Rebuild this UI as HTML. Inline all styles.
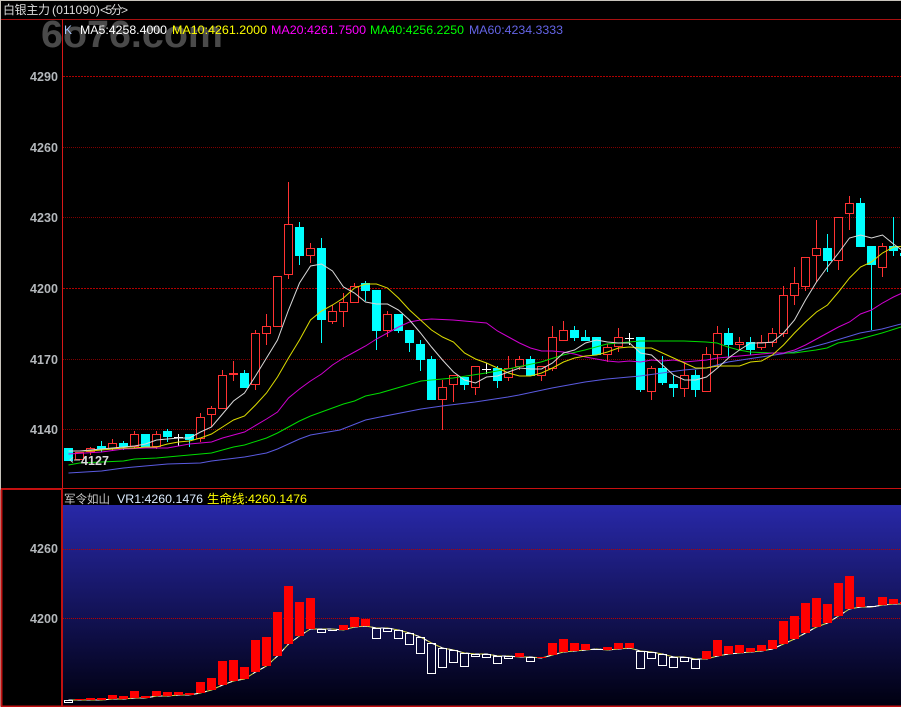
<!DOCTYPE html>
<html><head><meta charset="utf-8"><style>
html,body{margin:0;padding:0;background:#000;width:901px;height:707px;overflow:hidden}
svg{display:block}
text{font-family:"Liberation Sans","Noto Sans CJK SC",sans-serif;font-size:12px}
.a{font-weight:bold;fill:#b4b8bc;font-size:12.5px}
</style></head><body>
<svg width="901" height="707" viewBox="0 0 901 707" xmlns="http://www.w3.org/2000/svg">
<defs><linearGradient id="g" x1="0" y1="0" x2="0" y2="1"><stop offset="0" stop-color="#2828a8"/><stop offset="1" stop-color="#000010"/></linearGradient>
<clipPath id="c"><rect x="0" y="20" width="300" height="40"/></clipPath></defs>
<rect width="901" height="707" fill="#000"/>
<rect width="901" height="1" fill="#c8c4bc"/>
<rect width="1" height="707" fill="#c8c4bc"/>
<text x="41" y="47" clip-path="url(#c)" style="font-size:38px;font-weight:bold;fill:#4a4a4a" textLength="182" lengthAdjust="spacingAndGlyphs">6o76.com</text>
<text x="3" y="14" fill="#dcdcdc" textLength="47" style="font-size:12px">白银主力</text>
<text x="52" y="14" fill="#dcdcdc" textLength="48" lengthAdjust="spacingAndGlyphs" style="font-size:12px">(011090)</text>
<text x="100" y="14" fill="#dcdcdc" textLength="28" lengthAdjust="spacing" style="font-size:12px">&lt;5分&gt;</text>
<rect x="1" y="19" width="900" height="1" fill="#a81010"/>
<rect x="62" y="19" width="1" height="470" fill="#d81818"/>
<rect x="1" y="488" width="900" height="1" fill="#c81010"/>
<rect x="63" y="505" width="838" height="201" fill="url(#g)"/>
<path d="M1.5 489.500V706.500M62 489V706" stroke="#c01010" fill="none" stroke-width="2"/>
<rect x="1" y="489" width="61" height="1" fill="#c01010"/>
<rect x="1" y="705.500" width="900" height="1.500" fill="#c01010"/>
<text x="64" y="34" fill="#a8c8ff">K</text>
<text x="80" y="34" fill="#fff" textLength="87" lengthAdjust="spacingAndGlyphs">MA5:4258.4000</text>
<text x="172" y="34" fill="#ff0" textLength="95" lengthAdjust="spacingAndGlyphs">MA10:4261.2000</text>
<text x="271" y="34" fill="#f0f" textLength="95" lengthAdjust="spacingAndGlyphs">MA20:4261.7500</text>
<text x="370" y="34" fill="#0f0" textLength="94" lengthAdjust="spacingAndGlyphs">MA40:4256.2250</text>
<text x="469" y="34" fill="#6464e6" textLength="94" lengthAdjust="spacingAndGlyphs">MA60:4234.3333</text>
<text class="a" x="30" y="81" textLength="28">4290</text>
<text class="a" x="30" y="152" textLength="28">4260</text>
<text class="a" x="30" y="222" textLength="28">4230</text>
<text class="a" x="30" y="293" textLength="28">4200</text>
<text class="a" x="30" y="364" textLength="28">4170</text>
<text class="a" x="30" y="434" textLength="28">4140</text>
<text class="a" x="30" y="553" textLength="28">4260</text>
<text class="a" x="30" y="623" textLength="28">4200</text>
<path d="M63 76.500H901M63 288.500H901" stroke="#b00000" stroke-dasharray="2 1" fill="none"/>
<path d="M63 147.500H901M63 217.500H901M63 359.500H901M63 429.500H901" stroke="#800000" stroke-dasharray="1 1" fill="none"/>
<path d="M90.500 447v1M90.500 452v3M112.500 439v4M112.500 449v2M134.500 431v3M134.500 447v1M156.500 431v3M156.500 447v2M200.500 413v4M200.500 439v3M211.500 406v2M211.500 415v12M222.500 370v5M233.500 361v12M233.500 375v6M255.500 330v3M255.500 385v5M266.500 314v12M266.500 334v11M288.500 182v42M288.500 275v4M310.500 243v5M310.500 256v7M332.500 305v6M332.500 322v2M343.500 293v9M343.500 312v15M354.500 283v3M387.500 311v3M387.500 331v6M442.500 380v7M442.500 400v30M453.500 385v17M475.500 388v7M508.500 356v12M508.500 378v3M519.500 356v3M519.500 367v3M541.500 376v5M552.500 326v11M552.500 369v2M563.500 321v9M607.500 344v3M607.500 355v7M618.500 328v9M618.500 347v5M651.500 366v2M651.500 392v8M684.500 363v12M684.500 389v8M706.500 347v7M717.500 326v7M717.500 355v12M739.500 337v5M739.500 345v5M761.500 335v7M761.500 348v2M772.500 328v5M772.500 343v4M783.500 286v9M783.500 334v3M794.500 267v16M794.500 296v9M805.500 287v4M816.500 220v28M816.500 256v26M838.500 261v9M849.500 196v7M849.500 214v16M882.500 243v3M882.500 268v9" stroke="#ff3232" fill="none"/>
<path d="M75.500 452.500h8v7h-8zM86.500 448.500h8v3h-8zM108.500 443.500h8v5h-8zM130.500 434.500h8v12h-8zM152.500 434.500h8v12h-8zM196.500 417.500h8v21h-8zM207.500 408.500h8v6h-8zM218.500 375.500h8v33h-8zM229.500 373.500h8v1h-8zM251.500 333.500h8v51h-8zM262.500 326.500h8v7h-8zM273.500 276.500h8v50h-8zM284.500 224.500h8v50h-8zM306.500 248.500h8v7h-8zM328.500 311.500h8v10h-8zM339.500 302.500h8v9h-8zM350.500 286.500h8v16h-8zM383.500 314.500h8v16h-8zM438.500 387.500h8v12h-8zM449.500 375.500h8v9h-8zM471.500 366.500h8v21h-8zM504.500 368.500h8v9h-8zM515.500 359.500h8v7h-8zM537.500 366.500h8v9h-8zM548.500 337.500h8v31h-8zM559.500 330.500h8v10h-8zM603.500 347.500h8v7h-8zM614.500 337.500h8v9h-8zM647.500 368.500h8v23h-8zM680.500 375.500h8v13h-8zM702.500 354.500h8v37h-8zM713.500 333.500h8v21h-8zM735.500 342.500h8v2h-8zM757.500 342.500h8v5h-8zM768.500 333.500h8v9h-8zM779.500 295.500h8v38h-8zM790.500 283.500h8v12h-8zM801.500 257.500h8v29h-8zM812.500 248.500h8v7h-8zM834.500 217.500h8v43h-8zM845.500 203.500h8v10h-8zM878.500 246.500h8v21h-8z" stroke="#ff3232" fill="#000"/>
<path d="M101.500 441v5M101.500 449v3M123.500 441v2M123.500 447v3M167.500 429v2M167.500 437v5M189.500 440v7M244.500 370v3M299.500 222v5M299.500 256v9M321.500 238v10M321.500 320v23M365.500 281v2M365.500 291v10M376.500 331v19M398.500 331v2M409.500 343v9M420.500 340v4M420.500 360v11M431.500 356v3M464.500 385v5M497.500 366v2M497.500 381v7M530.500 356v3M574.500 326v4M574.500 338v3M585.500 330v7M640.500 390v2M662.500 356v12M662.500 383v2M673.500 375v9M673.500 388v9M695.500 370v5M695.500 390v7M728.500 328v5M728.500 345v12M750.500 337v5M750.500 350v5M827.500 234v14M827.500 261v11M860.500 198v5M871.500 265v65M893.500 217v29M893.500 251v5" stroke="#00ffff" fill="none"/>
<path d="M64 448h9v13h-9zM97 446h9v3h-9zM119 443h9v4h-9zM141 434h9v13h-9zM163 431h9v6h-9zM185 434h9v6h-9zM240 373h9v15h-9zM295 227h9v29h-9zM317 248h9v72h-9zM361 283h9v8h-9zM372 290h9v41h-9zM394 314h9v17h-9zM405 330h9v13h-9zM416 344h9v16h-9zM427 359h9v41h-9zM460 377h9v8h-9zM493 368h9v13h-9zM526 359h9v17h-9zM570 330h9v8h-9zM581 337h9v4h-9zM592 337h9v18h-9zM636 337h9v53h-9zM658 368h9v15h-9zM669 384h9v4h-9zM691 375h9v15h-9zM724 333h9v12h-9zM746 342h9v8h-9zM823 248h9v13h-9zM856 203h9v44h-9zM867 246h9v19h-9zM889 246h9v5h-9zM900 253h9v3h-9z" fill="#00ffff"/>
<path d="M174 437.500h9M178.500 434v12M482 369.500h9M486.500 363v11M625 338.500h9M629.500 333v12" stroke="#fff" fill="none"/>
<g fill="none" stroke-width="1">
<polyline stroke="#5a5ae0" points="68.500,473 101.500,471 123.500,468 167.500,464 200.500,463 211.500,461 244.500,457 266.500,453 277.500,449 299.500,439 310.500,435 340,430 365.500,420 380,417 421,409 442,406 475,402 508,397 519,395 552,388 585,382 607,379 640,376 684,370 706,368 728,362 761,357 794,352 827,343 860,333 882,329 901,324"/>
<polyline stroke="#00dc00" points="68.500,465 79.500,463 101.500,462 123.500,461 134.500,459 156.500,458 178.500,456 200.500,454 211.500,453 233.500,447 244.500,445 266.500,438 277.500,433 288.500,427 299.500,421 310.500,416 321.500,412 332.500,408 343.500,404 354.500,401 365.500,396 380,393 421,381 453,378 486,373 508,369 541,362 563,355 585,350 607,344 629,342 640,341 684,341 706,342 717,343 728,347 739,350 750,352 772,353 794,353 816,350 827,348 838,343 860,339 882,333 901,327"/>
<polyline stroke="#d000d0" points="68.500,454 101.500,452 123.500,449 145.500,448 167.500,448 189.500,444 211.500,442 222.500,438 244.500,432 266.500,419 277.500,412 288.500,398 299.500,389 310.500,381 321.500,374 332.500,365 343.500,358 354.500,352 365.500,346 376.500,339 387.500,333 398.500,327 409.500,322 420.500,320 431.500,319 453,320 475.500,322 486.500,323 497.500,331 508.500,337 519.500,343 530.500,348 541.500,351 552.500,351 563.500,352 574.500,354 585.500,357 596.500,359 607.500,361 618.500,362 629.500,361 640.500,362 651.500,360 662.500,361 673.500,360 684.500,362 695.500,361 706.500,360 717.500,358 728.500,357 739.500,356 750.500,355 761.500,354 772.500,353 783.500,353 794.500,350 805.500,345 816.500,339 827.500,333 838.500,327 849.500,322 860.500,314 871.500,310 882.500,303 893.500,297 904.500,292"/>
<polyline stroke="#dcdc00" points="68.500,451 79.500,451 90.500,451 101.500,450 112.500,449 123.500,448 134.500,448 145.500,447 156.500,447 167.500,444 178.500,442 189.500,441 200.500,438 211.500,434 222.500,427 233.500,420 244.500,416 255.500,405 266.500,393 277.500,377 288.500,358 299.500,340 310.500,320 321.500,311 332.500,305 343.500,298 354.500,288 365.500,284 376.500,284 387.500,288 398.500,298 409.500,310 420.500,320 431.500,330 442.500,337 453.500,342 464.500,353 475.500,359 486.500,363 497.500,368 508.500,373 519.500,376 530.500,376 541.500,373 552.500,368 563.500,362 574.500,358 585.500,356 596.500,355 607.500,352 618.500,348 629.500,347 640.500,348 651.500,348 662.500,353 673.500,358 684.500,363 695.500,368 706.500,368 717.500,366 728.500,366 739.500,366 750.500,362 761.500,361 772.500,355 783.500,345 794.500,333 805.500,322 816.500,312 827.500,305 838.500,292 849.500,278 860.500,267 871.500,262 882.500,253 893.500,247 904.500,246"/>
<polyline stroke="#d8d8d8" points="68.500,451 79.500,451 90.500,450 101.500,449 112.500,448 123.500,447 134.500,446 145.500,444 156.500,440 167.500,439 178.500,438 189.500,438 200.500,432 211.500,427 222.500,414 233.500,401 244.500,393 255.500,376 266.500,358 277.500,340 288.500,310 299.500,283 310.500,266 321.500,264 332.500,271 343.500,287 354.500,293 365.500,302 376.500,304 387.500,304 398.500,310 409.500,320 420.500,333 431.500,347 442.500,360 453.500,372 464.500,380 475.500,383 486.500,377 497.500,376 508.500,372 519.500,368 530.500,369 541.500,369 552.500,363 563.500,353 574.500,350 585.500,343 596.500,340 607.500,342 618.500,343 629.500,343 640.500,353 651.500,355 662.500,365 673.500,375 684.500,380 695.500,380 706.500,377 717.500,368 728.500,358 739.500,350 750.500,343 761.500,343 772.500,342 783.500,333 794.500,320 805.500,300 816.500,282 827.500,267 838.500,253 849.500,238 860.500,235 871.500,238 882.500,235 893.500,244 904.500,252"/>
</g>
<path d="M74 460h6M73 457.500l-3 2.500 3 2.500" stroke="#c8c8c8" fill="none"/>
<text x="81" y="465" textLength="28" style="font-weight:bold;font-size:12.500px;fill:#dcdcdc">4127</text>
<text x="64" y="503" fill="#c8c8c8" textLength="46" style="font-size:11.500px">军令如山</text>
<text x="117" y="503" fill="#dcecff" textLength="86" lengthAdjust="spacingAndGlyphs">VR1:4260.1476</text>
<text x="207" y="503" fill="#ff0" textLength="100" lengthAdjust="spacingAndGlyphs">生命线:4260.1476</text>
<path d="M63 549.500H901M63 618.500H901" stroke="#b80000" stroke-dasharray="1 1" fill="none"/>
<polyline fill="none" stroke="#d8d840" stroke-width="1" points="68.500,700 79.500,700 90.500,700 101.500,700 112.500,699 123.500,699 134.500,698 145.500,698 156.500,696 167.500,696 178.500,695 189.500,695 200.500,693 211.500,690 222.500,685 233.500,681 244.500,679 255.500,672 266.500,666 277.500,656 288.500,644 299.500,636 310.500,629 321.500,629 332.500,629 343.500,630 354.500,627 365.500,626 376.500,628 387.500,628 398.500,630 409.500,633 420.500,637 431.500,643 442.500,648 453.500,650 464.500,653 475.500,654 486.500,654 497.500,656 508.500,656 519.500,657 530.500,657 541.500,658 552.500,655 563.500,652 574.500,651 585.500,650 596.500,649 607.500,650 618.500,649 629.500,648 640.500,651 651.500,652 662.500,654 673.500,657 684.500,657 695.500,659 706.500,659 717.500,656 728.500,654 739.500,653 750.500,652 761.500,651 772.500,649 783.500,644 794.500,639 805.500,633 816.500,627 827.500,623 838.500,616 849.500,609 860.500,607 871.500,607 882.500,605 893.500,604 904.500,604"/>
<polyline fill="none" stroke="#fff" stroke-width="1" stroke-dasharray="4 5" points="68.500,700 79.500,700 90.500,700 101.500,700 112.500,699 123.500,699 134.500,698 145.500,698 156.500,696 167.500,696 178.500,695 189.500,695 200.500,693 211.500,690 222.500,685 233.500,681 244.500,679 255.500,672 266.500,666 277.500,656 288.500,644 299.500,636 310.500,629 321.500,629 332.500,629 343.500,630 354.500,627 365.500,626 376.500,628 387.500,628 398.500,630 409.500,633 420.500,637 431.500,643 442.500,648 453.500,650 464.500,653 475.500,654 486.500,654 497.500,656 508.500,656 519.500,657 530.500,657 541.500,658 552.500,655 563.500,652 574.500,651 585.500,650 596.500,649 607.500,650 618.500,649 629.500,648 640.500,651 651.500,652 662.500,654 673.500,657 684.500,657 695.500,659 706.500,659 717.500,656 728.500,654 739.500,653 750.500,652 761.500,651 772.500,649 783.500,644 794.500,639 805.500,633 816.500,627 827.500,623 838.500,616 849.500,609 860.500,607 871.500,607 882.500,605 893.500,604 904.500,604"/>
<path d="M75 699h9v1h-9zM86 698h9v2h-9zM97 698h9v2h-9zM108 695h9v4h-9zM119 696h9v3h-9zM130 691h9v7h-9zM141 696h9v2h-9zM152 691h9v5h-9zM163 692h9v4h-9zM174 692h9v3h-9zM185 693h9v2h-9zM196 682h9v11h-9zM207 678h9v12h-9zM218 661h9v24h-9zM229 660h9v21h-9zM240 667h9v12h-9zM251 640h9v32h-9zM262 637h9v29h-9zM273 612h9v44h-9zM284 586h9v58h-9zM295 602h9v34h-9zM306 598h9v31h-9zM339 625h9v5h-9zM350 617h9v10h-9zM361 619h9v7h-9zM515 653h9v4h-9zM537 657h9v1h-9zM548 643h9v12h-9zM559 639h9v13h-9zM570 643h9v8h-9zM581 644h9v6h-9zM603 647h9v3h-9zM614 643h9v6h-9zM625 643h9v5h-9zM702 651h9v8h-9zM713 640h9v16h-9zM724 646h9v8h-9zM735 645h9v8h-9zM746 648h9v4h-9zM757 645h9v6h-9zM768 640h9v9h-9zM779 621h9v23h-9zM790 616h9v23h-9zM801 603h9v30h-9zM812 598h9v29h-9zM823 604h9v19h-9zM834 583h9v33h-9zM845 576h9v33h-9zM856 597h9v10h-9zM878 597h9v8h-9zM889 599h9v5h-9zM900 602h9v2h-9z" fill="#ff0000"/>
<path d="M64.500 700.500h8v2h-8zM317.500 629.500h8v3h-8zM372.500 628.500h8v10h-8zM383.500 628.500h8v3h-8zM394.500 630.500h8v8h-8zM405.500 633.500h8v11h-8zM416.500 637.500h8v16h-8zM427.500 643.500h8v30h-8zM438.500 648.500h8v19h-8zM449.500 650.500h8v12h-8zM460.500 653.500h8v13h-8zM471.500 654.500h8v2h-8zM482.500 654.500h8v3h-8zM493.500 656.500h8v7h-8zM504.500 656.500h8v2h-8zM526.500 657.500h8v4h-8zM636.500 651.500h8v17h-8zM647.500 652.500h8v6h-8zM658.500 654.500h8v11h-8zM669.500 657.500h8v10h-8zM680.500 657.500h8v4h-8zM691.500 659.500h8v9h-8z" stroke="#fff" fill="none"/>
<path d="M328 630.500h9M592 649.500h9M867 606.500h9" stroke="#fff" fill="none"/>
</svg>
</body></html>
